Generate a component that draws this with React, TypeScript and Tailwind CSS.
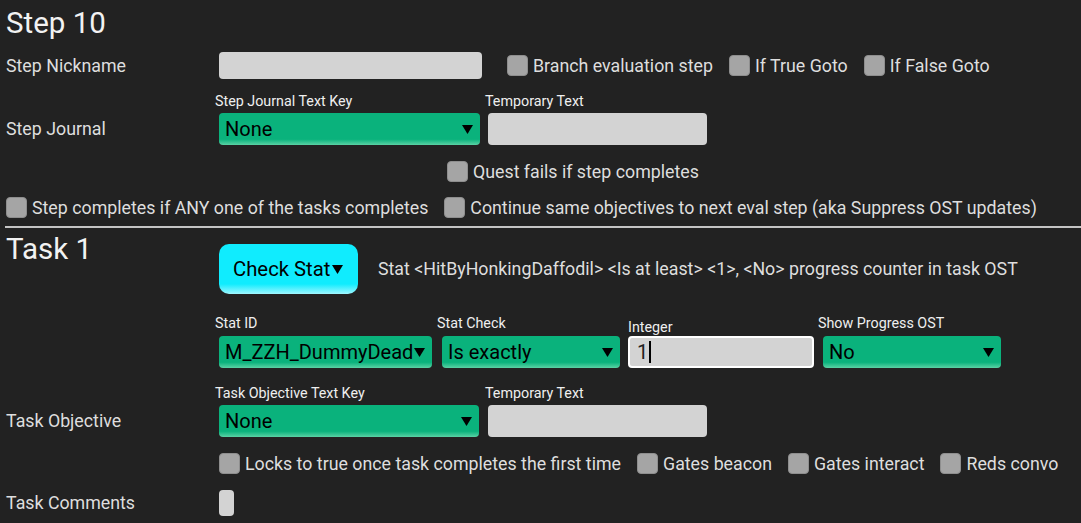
import React from "react";

function Arrow({ className = "" }: { className?: string }) {
  return (
    <svg width="11" height="9" viewBox="0 0 11 9" className={className}>
      <polygon points="0,0 11,0 5.5,9" fill="#000" />
    </svg>
  );
}

function Check({ label, className = "" }: { label: string; className?: string }) {
  return (
    <div className={"flex items-center h-[21px] " + className}>
      <span className="w-[21px] h-[21px] rounded-[4px] bg-[#a5a5a5] border border-[#8e8e8e] shrink-0" />
      <span className="ml-[5px] text-[17.8px] leading-[21px] text-[#dedede] whitespace-nowrap">{label}</span>
    </div>
  );
}

function Dropdown({ value, w, tight = false }: { value: string; w: string; tight?: boolean }) {
  return (
    <div
      className={
        "h-[32px] rounded-[4px] bg-[linear-gradient(to_bottom,#0ab27c_0%,#0ab27c_82%,#5ad3a5_100%)] flex items-center pl-[6px] pr-[7px] overflow-hidden " +
        w
      }
    >
      <span className="text-[20px] leading-[32px] text-black whitespace-nowrap">{value}</span>
      <Arrow className={tight ? "ml-[1px] shrink-0" : "ml-auto shrink-0"} />
    </div>
  );
}

function SmallLabel({ text, className = "" }: { text: string; className?: string }) {
  return (
    <div className={"text-[14.3px] leading-[17px] text-[#efefef] whitespace-nowrap " + className}>{text}</div>
  );
}

function TextBox({ w, h = "h-[32px]" }: { w: string; h?: string }) {
  return <div className={"rounded-[4px] bg-[#d3d3d3] " + w + " " + h} />;
}

export default function App() {
  return (
    <div className="w-[1081px] h-[523px] overflow-hidden bg-[#222222] font-['Roboto','Liberation_Sans',sans-serif] text-[#dedede]">
      {/* Step title */}
      <div className="h-[52px] pt-[6px] pl-[6px]">
        <div className="text-[29.5px] leading-[34px] text-[#f2f2f2]">Step 10</div>
      </div>

      {/* Nickname row */}
      <div className="flex items-center h-[27px]">
        <div className="w-[219px] pl-[6px] text-[17.8px] leading-[21px]">Step Nickname</div>
        <TextBox w="w-[263px]" h="h-[27px]" />
        <Check label="Branch evaluation step" className="ml-[25px]" />
        <Check label="If True Goto" className="ml-[16px]" />
        <Check label="If False Goto" className="ml-[16px]" />
      </div>

      {/* Step Journal row */}
      <div className="flex items-end mt-[14px]">
        <div className="w-[219px] pl-[6px] text-[17.8px] leading-[32px]">Step Journal</div>
        <div className="flex flex-col">
          <SmallLabel text="Step Journal Text Key" className="-ml-[4px] mb-[3px]" />
          <Dropdown value="None" w="w-[261px]" />
        </div>
        <div className="flex flex-col ml-[8px]">
          <SmallLabel text="Temporary Text" className="-ml-[3px] mb-[3px]" />
          <TextBox w="w-[219px]" />
        </div>
      </div>

      {/* Quest fails */}
      <div className="flex mt-[16px] pl-[447px]">
        <Check label="Quest fails if step completes" />
      </div>

      {/* Step completes */}
      <div className="flex mt-[15px] pl-[6px]">
        <Check label="Step completes if ANY one of the tasks completes" />
        <Check label="Continue same objectives to next eval step (aka Suppress OST updates)" className="ml-[16px]" />
      </div>

      {/* Divider */}
      <div className="mt-[8px] ml-[5px] h-[2px] bg-[#c4c4c4]" />

      {/* Task 1 */}
      <div className="flex items-start mt-[4px]">
        <div className="w-[219px] pl-[6px] text-[29.5px] leading-[34px] text-[#f2f2f2]">Task 1</div>
        <div className="mt-[12px] flex items-center">
          <div className="w-[139px] h-[50px] rounded-[10px] bg-[linear-gradient(to_bottom,#10ecfe_0%,#10ecfe_80%,#9ff6ff_100%)] flex items-center pl-[14px]">
            <span className="text-[20.3px] leading-[24px] text-black whitespace-nowrap">Check Stat</span>
            <Arrow className="ml-[2px]" />
          </div>
          <div className="ml-[20px] text-[17.8px] leading-[22px] text-[#dedede] whitespace-nowrap">
            Stat &lt;HitByHonkingDaffodil&gt; &lt;Is at least&gt; &lt;1&gt;, &lt;No&gt; progress counter in task OST
          </div>
        </div>
      </div>

      {/* Stat row */}
      <div className="flex items-end mt-[21px] pl-[219px]">
        <div className="flex flex-col">
          <SmallLabel text="Stat ID" className="-ml-[4px] mb-[4px]" />
          <Dropdown value="M_ZZH_DummyDead" w="w-[213px]" tight />
        </div>
        <div className="flex flex-col ml-[10px]">
          <SmallLabel text="Stat Check" className="-ml-[5px] mb-[4px]" />
          <Dropdown value="Is exactly" w="w-[178px]" />
        </div>
        <div className="flex flex-col ml-[8px]">
          <SmallLabel text="Integer" className="mb-[0px]" />
          <div className="w-[186px] h-[32px] rounded-[4px] bg-[#d3d3d3] border-2 border-white flex items-center pl-[7px]">
            <span className="text-[20px] leading-[24px] text-[#222]">1</span>
            <span className="w-[2px] h-[22px] bg-black ml-[1px]" />
          </div>
        </div>
        <div className="flex flex-col ml-[9px]">
          <SmallLabel text="Show Progress OST" className="-ml-[5px] mb-[4px]" />
          <Dropdown value="No" w="w-[178px]" />
        </div>
      </div>

      {/* Task Objective */}
      <div className="flex items-end mt-[17px]">
        <div className="w-[219px] pl-[6px] text-[17.8px] leading-[32px]">Task Objective</div>
        <div className="flex flex-col">
          <SmallLabel text="Task Objective Text Key" className="-ml-[4px] mb-[3px]" />
          <Dropdown value="None" w="w-[260px]" />
        </div>
        <div className="flex flex-col ml-[9px]">
          <SmallLabel text="Temporary Text" className="-ml-[3px] mb-[3px]" />
          <TextBox w="w-[219px]" />
        </div>
      </div>

      {/* Locks row */}
      <div className="flex mt-[16px] pl-[219px]">
        <Check label="Locks to true once task completes the first time" />
        <Check label="Gates beacon" className="ml-[16px]" />
        <Check label="Gates interact" className="ml-[16px]" />
        <Check label="Reds convo" className="ml-[16px]" />
      </div>

      {/* Task Comments */}
      <div className="flex items-center mt-[16px]">
        <div className="w-[219px] pl-[6px] text-[17.8px] leading-[26px]">Task Comments</div>
        <TextBox w="w-[15px]" h="h-[26px]" />
      </div>
    </div>
  );
}
